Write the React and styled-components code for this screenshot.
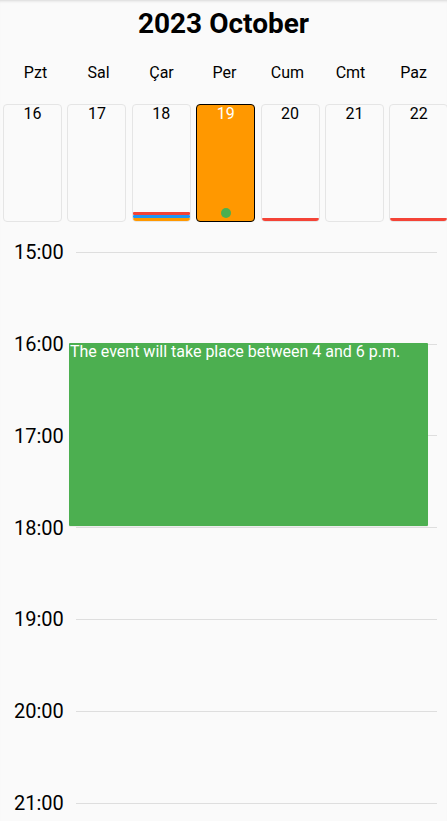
import React from "react";
import styled, { createGlobalStyle } from "styled-components";

const GlobalStyle = createGlobalStyle`
  html, body { margin: 0; padding: 0; background: #fafafa; }
  body { font-family: Roboto, "Noto Sans", "Liberation Sans", sans-serif; color: #000; }
  * { box-sizing: border-box; }
`;

const ROW = 91.8;
const PAD_TOP = 18.3;
const MARK_H = 24;

const Screen = styled.div`
  width: 100%;
  height: 100vh;
  overflow: hidden;
  background: #fafafa;
  box-shadow: inset 0 3px 3px -2px rgba(0, 0, 0, 0.14);
  display: flex;
  flex-direction: column;
`;

const Title = styled.h1`
  margin: 0;
  height: 48px;
  line-height: 48px;
  text-align: center;
  font-size: 28px;
  font-weight: 700;
  color: #000;
`;

const WeekRow = styled.div`
  display: grid;
  grid-template-columns: repeat(7, 1fr);
  padding: 0 2px 0 4px;
  height: 50px;
  line-height: 50px;
  font-size: 16px;
  text-align: center;
  color: #000;
`;

const CardRow = styled.div`
  display: flex;
  gap: 5.4px;
  padding-left: 3px;
  margin-top: 6px;
  overflow: hidden;
  flex-shrink: 0;
`;

const DayCard = styled.div`
  flex: 0 0 59px;
  height: 118px;
  border-radius: 4px;
  border: ${(p) => (p.$selected ? "1.5px solid #000" : "1px solid #e5e5e5")};
  background: ${(p) => (p.$selected ? "#ff9800" : "#fafafa")};
  color: ${(p) => (p.$selected ? "#fff" : "#000")};
  display: flex;
  flex-direction: column;
  align-items: stretch;
  overflow: hidden;
`;

const DayNum = styled.div`
  font-size: 16px;
  line-height: 18.75px;
  text-align: center;
`;

const Spacer = styled.div`
  flex: 1;
`;

const Bar = styled.div`
  height: 3px;
  background: ${(p) => p.$color};
  border-radius: 1px;
`;

const Dot = styled.div`
  width: 10px;
  height: 10px;
  border-radius: 50%;
  background: #4caf50;
  align-self: center;
  margin-bottom: 3.5px;
`;

const Timeline = styled.div`
  position: relative;
  flex: 1;
  overflow: hidden;
  padding-top: ${PAD_TOP}px;
`;

const HourRow = styled.div`
  height: ${ROW}px;
`;

const HourMark = styled.div`
  display: flex;
  align-items: center;
  height: ${MARK_H}px;
  padding: 0 10px 0 14px;
  gap: 12px;
`;

const HourLabel = styled.span`
  width: 50px;
  font-size: 20px;
  line-height: ${MARK_H}px;
  color: #000;
  white-space: nowrap;
`;

const HourLine = styled.div`
  flex: 1;
  height: 1px;
  background: #dedede;
`;

const EventBlock = styled.div`
  position: absolute;
  left: 69px;
  width: 359px;
  background: #4caf50;
  color: #fff;
  font-size: 16px;
  line-height: 17.6px;
  padding: 0 1px;
  border-radius: 1px;
  box-shadow: 0 1px 1px rgba(0, 0, 0, 0.06);
  white-space: nowrap;
  overflow: hidden;
`;

const weekdays = ["Pzt", "Sal", "Çar", "Per", "Cum", "Cmt", "Paz"];

const days = [
  { n: 16, bars: [] },
  { n: 17, bars: [] },
  { n: 18, bars: ["#f44336", "#2196f3", "#ff9800"] },
  { n: 19, bars: [], selected: true, dot: true },
  { n: 20, bars: ["#f44336"] },
  { n: 21, bars: [] },
  { n: 22, bars: ["#f44336"] },
];

const hours = [15, 16, 17, 18, 19, 20, 21];

const event = {
  start: 16,
  end: 18,
  text: "The event will take place between 4 and 6 p.m.",
};

export default function App() {
  const first = hours[0];
  const eventTop = PAD_TOP + MARK_H / 2 + (event.start - first) * ROW - 1.6;
  const eventHeight = (event.end - event.start) * ROW - 0.6;
  return (
    <>
      <GlobalStyle />
      <Screen>
        <Title>2023 October</Title>
        <WeekRow>
          {weekdays.map((d) => (
            <span key={d}>{d}</span>
          ))}
        </WeekRow>
        <CardRow>
          {days.map((d) => (
            <DayCard key={d.n} $selected={d.selected}>
              <DayNum>{d.n}</DayNum>
              <Spacer />
              {d.dot && <Dot />}
              {d.bars.map((c, i) => (
                <Bar key={i} $color={c} />
              ))}
            </DayCard>
          ))}
        </CardRow>
        <Timeline>
          {hours.map((h) => (
            <HourRow key={h}>
              <HourMark>
                <HourLabel>{h}:00</HourLabel>
                <HourLine />
              </HourMark>
            </HourRow>
          ))}
          <EventBlock style={{ top: eventTop, height: eventHeight }}>
            {event.text}
          </EventBlock>
        </Timeline>
      </Screen>
    </>
  );
}
